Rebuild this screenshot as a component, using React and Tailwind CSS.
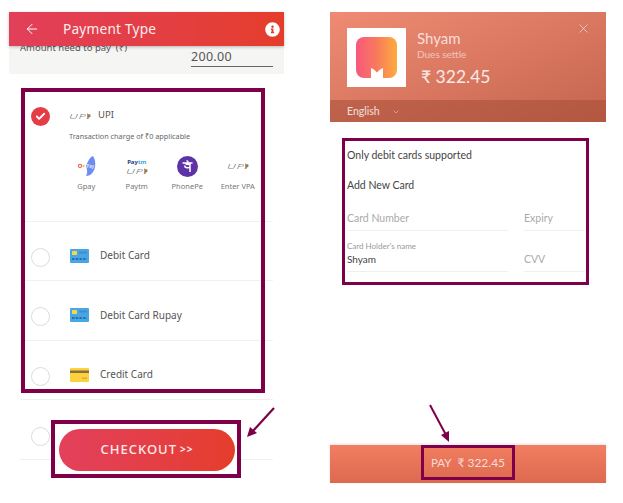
import { ArrowLeft, Check, ChevronDown, X } from 'lucide-react'
import { FaInfoCircle } from 'react-icons/fa'

const openSans = 'font-["Noto_Sans","DejaVu_Sans",sans-serif]'
const lato = 'font-["Lato","DejaVu_Sans",sans-serif]'

function UpiLogo({ className = '' }) {
  return (
    <span className={`flex w-[22px] items-center ${className}`}>
      <span className="inline-block origin-left scale-x-[1.6] text-[8px] font-light italic leading-[8px] tracking-[0.4px] text-[#77777a]">UPI</span>
      <svg width="4" height="6" viewBox="0 0 4 6" className="ml-auto">
        <path d="M0 0l3 3-3 3z" fill="#e98a2e" />
        <path d="M1.5 1l2.5 2-2.5 2z" fill="#4f9a58" />
      </svg>
    </span>
  )
}

function Radio() {
  return <span className="block h-[19px] w-[19px] shrink-0 rounded-full border border-[#dcdcdc] bg-white" />
}

function CardIcon({ yellow }) {
  if (yellow) {
    return (
      <svg width="19" height="14" viewBox="0 0 19 14" className="shrink-0">
        <rect width="19" height="14" rx="1" fill="#fbd13d" />
        <rect y="2.5" width="19" height="2.5" fill="#8d6b3f" />
        <rect x="12" y="9.5" width="5" height="1.5" fill="#d9ac2f" />
      </svg>
    )
  }
  return (
    <svg width="19" height="14" viewBox="0 0 19 14" className="shrink-0">
      <rect width="19" height="14" rx="1" fill="#49a6e5" />
      <rect x="2" y="2" width="5" height="4" rx="0.5" fill="#f5d54a" />
      <rect x="9" y="2.5" width="8" height="2" fill="#3d8ed0" />
      <path d="M2 10h15" stroke="#1d5f9f" strokeWidth="1.4" strokeDasharray="2.5 1.2" />
    </svg>
  )
}

function PayRow({ label, yellow }) {
  return (
    <div className="flex h-[59.5px] gap-[20px] border-b border-[#f1f1f1] pl-[11px] pt-[26px]">
      <Radio />
      <div className="mt-[1px] flex h-[14px] items-center">
        <CardIcon yellow={yellow} />
        <span className="ml-[11px] text-[10px] text-[#555]">{label}</span>
      </div>
    </div>
  )
}

function UpiApp({ label, children }) {
  return (
    <div className="flex w-[50.5px] flex-col items-center">
      <div className="flex h-[22px] items-center justify-center">{children}</div>
      <span className="mt-[4px] text-[7.5px] leading-[10px] text-[#777]">{label}</span>
    </div>
  )
}

function GpayIcon() {
  return (
    <svg width="20" height="20" viewBox="0 0 20 20">
      <path d="M10 10C12 5 14 1 17 0c3 4 3 12 0 16-2 3-5 4-7 4 2-3 1-7 0-10z" fill="#6f8df0" />
      <circle cx="4" cy="10" r="1.6" fill="none" stroke="#ea6a5c" strokeWidth="1.1" />
      <circle cx="7.5" cy="10" r="1.2" fill="#f4c74b" />
      <text x="10.5" y="12" fontSize="4.5" fill="#fff">Pay</text>
    </svg>
  )
}

function PhonePeIcon() {
  return (
    <svg width="21" height="21" viewBox="0 0 21 21">
      <circle cx="10.5" cy="10.5" r="10.5" fill="#5f33a8" />
      <path
        d="M5.5 7h10M13 7v9M13 11c-1.5 1.3-5 1.3-5.5-1.5M8 7c1 1.5 4 1.500 4.500 1.500M9.500 4.500l2 1.500"
        fill="none"
        stroke="#fff"
        strokeWidth="1.5"
      />
    </svg>
  )
}

function PaymentType() {
  return (
    <div className={`flex w-[275px] flex-col ${openSans}`}>
      <header className="z-10 flex h-[34px] items-center bg-gradient-to-r from-[#e23f5a] to-[#e53d2a] pl-[15px] pr-[4px] text-white shadow-[0_1px_3px_rgba(0,0,0,0.25)]">
        <ArrowLeft size={16} strokeWidth={1.5} />
        <span className="ml-[23px] text-[13.7px] tracking-[0.2px] opacity-90">Payment Type</span>
        <FaInfoCircle size={15} className="ml-auto" />
      </header>
      <div className="relative flex h-[28px] justify-between overflow-hidden bg-[#f5f5f4] pl-[11px] pr-[11px] text-[#555]">
        <span className="-mt-[5px] text-[9.5px] leading-[14px]">Amount need to pay&nbsp; (₹)</span>
        <span className="mt-[1px] h-[20px] w-[82px] border-b border-[#666] text-[12.5px] leading-[19px] tracking-[0.3px]">200.00</span>
      </div>
      <div className="mx-[11px] flex flex-col">
        <div className="h-[147.5px] border-b border-[#f1f1f1] pl-[11px] pt-[33px]">
          <div className="flex gap-[19px]">
            <span className="flex h-[19px] w-[19px] shrink-0 items-center justify-center rounded-full bg-[#e43d46] text-white">
              <Check size={11} strokeWidth={4} />
            </span>
            <div className="flex h-[17px] items-center">
              <UpiLogo className="mr-[7px]" />
              <span className="text-[9.5px] text-[#555]">UPI</span>
            </div>
          </div>
          <p className="mt-[5px] pl-[38px] text-[7.3px] leading-[10px] text-[#666]">Transaction charge of ₹0 applicable</p>
          <div className="mt-[14px] ml-[30px] flex">
            <UpiApp label="Gpay"><GpayIcon /></UpiApp>
            <UpiApp label="Paytm">
              <div className="flex flex-col items-center gap-[1px]">
                <span className="text-[6px] font-bold leading-[8px] text-[#27407f]">Pay<span className="text-[#3ba4e3]">tm</span></span>
                <UpiLogo />
              </div>
            </UpiApp>
            <UpiApp label="PhonePe"><PhonePeIcon /></UpiApp>
            <UpiApp label="Enter VPA"><UpiLogo /></UpiApp>
          </div>
        </div>
        <PayRow label="Debit Card" />
        <PayRow label="Debit Card Rupay" />
        <PayRow label="Credit Card" yellow />
        <div className="h-[60px] border-b border-[#f1f1f1] pl-[11px] pt-[27px]">
          <Radio />
        </div>
      </div>
    </div>
  )
}

function AppLogo() {
  return (
    <div className="flex h-[59px] w-[59px] shrink-0 items-center justify-center bg-white">
      <div className="flex h-[41px] w-[41px] items-end justify-center rounded-[8px] bg-gradient-to-r from-[#f8577d] via-[#f8795c] to-[#fdab3a]">
        <svg width="12" height="10" viewBox="0 0 12 10">
          <path d="M0 10V0l3 1.500 3 3 3-3 3-1.500v10z" fill="#fff" />
        </svg>
      </div>
    </div>
  )
}

function CardField({ label, value, className = '' }) {
  return (
    <div className={`flex h-[41px] flex-col justify-end border-b border-[#f0f0f0] pb-[4px] ${className}`}>
      {value ? (
        <>
          <span className="text-[8px] leading-[12px] text-[#999]">{label}</span>
          <span className="text-[10px] leading-[15px] text-[#444]">{value}</span>
        </>
      ) : (
        <span className="text-[10.5px] leading-[15px] text-[#aaa]">{label}</span>
      )}
    </div>
  )
}

function Checkout() {
  return (
    <div className={`flex h-[471px] w-[276px] flex-col ${lato}`}>
      <header className="bg-gradient-to-br from-[#ef8b73] to-[#c5654f] text-white">
        <div className="flex h-[88px] pl-[17px] pt-[16px]">
          <AppLogo />
          <div className="ml-[11px] flex flex-1 flex-col text-white/75">
            <span className="text-[15px] leading-[20px]">Shyam</span>
            <span className="text-[10px] leading-[12px] text-white/55">Dues settle</span>
            <span className="ml-[4px] mt-[5px] text-[17.5px] leading-[24px] text-white/85">₹ 322.45</span>
          </div>
          <X size={15} strokeWidth={1.2} className="mr-[15px] mt-[-7px] text-white/70" />
        </div>
        <div className="flex h-[22px] items-center bg-[#a24a33]/50 pl-[17px] pt-[1px] text-[10.5px] text-white/80">
          English
          <ChevronDown size={8} className="ml-[12px] text-white/60" />
        </div>
      </header>
      <div className="pl-[17px] pr-[21px] text-[#444]">
        <p className="mt-[26px] text-[10.5px] leading-[14px]">Only debit cards supported</p>
        <p className="mt-[16px] text-[10.5px] leading-[14px]">Add New Card</p>
        <div className="-mt-[2px] grid grid-cols-[161px_61px] gap-x-[16px]">
          <CardField label="Card Number" />
          <CardField label="Expiry" />
          <CardField label="Card Holder's name" value="Shyam" />
          <CardField label="CVV" />
        </div>
      </div>
      <button className="mt-auto flex h-[38px] items-center justify-center gap-[6px] bg-gradient-to-b from-[#f27e61] to-[#dc6a4e] pb-[3px] text-[11.5px] text-white/75 shadow-[0_-1px_3px_rgba(0,0,0,0.12)]">
        PAY <span className="text-[12px]">₹ 322.45</span>
      </button>
    </div>
  )
}

export default function App() {
  return (
    <div className="relative h-[503px] w-[623px] overflow-hidden bg-white">
      <div className="flex gap-[46px] pl-[9px] pt-[12px]">
        <PaymentType />
        <Checkout />
      </div>

      {/* purple annotations drawn on top of the screenshots */}
      <div className="absolute left-[21px] top-[88px] h-[305px] w-[244px] border-4 border-[#7d0048]" />
      <div className="absolute left-[51px] top-[420px] flex h-[58px] w-[190px] items-center justify-center border-[4px] border-[#7d0048] bg-white pl-[2px] pt-[1px]">
        <button className="flex h-[42px] w-[176px] items-center justify-center gap-[3px] rounded-full bg-gradient-to-r from-[#e3405c] to-[#e53d2a] font-['Noto_Sans',sans-serif] text-[13px] font-medium tracking-[1px] text-white/90">
          CHECKOUT <span className="text-[10px] font-bold">&gt;&gt;</span>
        </button>
      </div>
      <div className="absolute left-[342px] top-[138px] h-[147px] w-[247px] border-[3px] border-[#7d0048]" />
      <div className="absolute left-[421px] top-[445px] h-[35px] w-[94px] border-[3px] border-[#7d0048]" />
      <svg width="623" height="503" viewBox="0 0 623 503" className="pointer-events-none absolute left-0 top-0">
        <path d="M274 408L252 432" stroke="#7d0048" strokeWidth="2.2" />
        <path d="M247 437l3-10 7 6z" fill="#7d0048" />
        <path d="M430 405L446 435" stroke="#7d0048" strokeWidth="2" />
        <path d="M449 442l-8-7 8-4z" fill="#7d0048" />
      </svg>
    </div>
  )
}
